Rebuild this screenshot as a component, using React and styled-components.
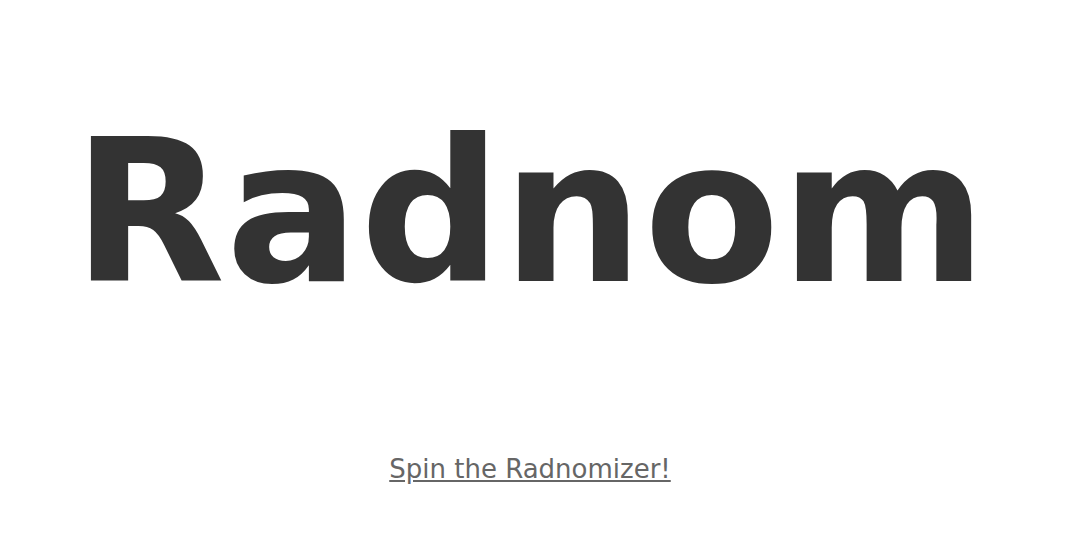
import React from "react";
import styled, { createGlobalStyle } from "styled-components";

const Global = createGlobalStyle`
  html, body { margin: 0; padding: 0; background: #fff; }
  body { font-family: "DejaVu Sans", Verdana, sans-serif; }
`;

const Page = styled.main`
  display: flex;
  flex-direction: column;
  align-items: center;
  width: 1060px;
  padding-top: 114px;
`;

const Title = styled.h1`
  margin: 0;
  font-size: 198px;
  font-weight: bold;
  line-height: 1;
  color: #333;
  letter-spacing: 0.6px;
`;

const SpinLink = styled.a`
  margin-top: 142px;
  font-size: 26px;
  color: #666;
  text-decoration: underline;
  cursor: pointer;
`;

export default function App() {
  return (
    <>
      <Global />
      <Page>
        <Title>Radnom</Title>
        <SpinLink href="#">Spin the Radnomizer!</SpinLink>
      </Page>
    </>
  );
}
